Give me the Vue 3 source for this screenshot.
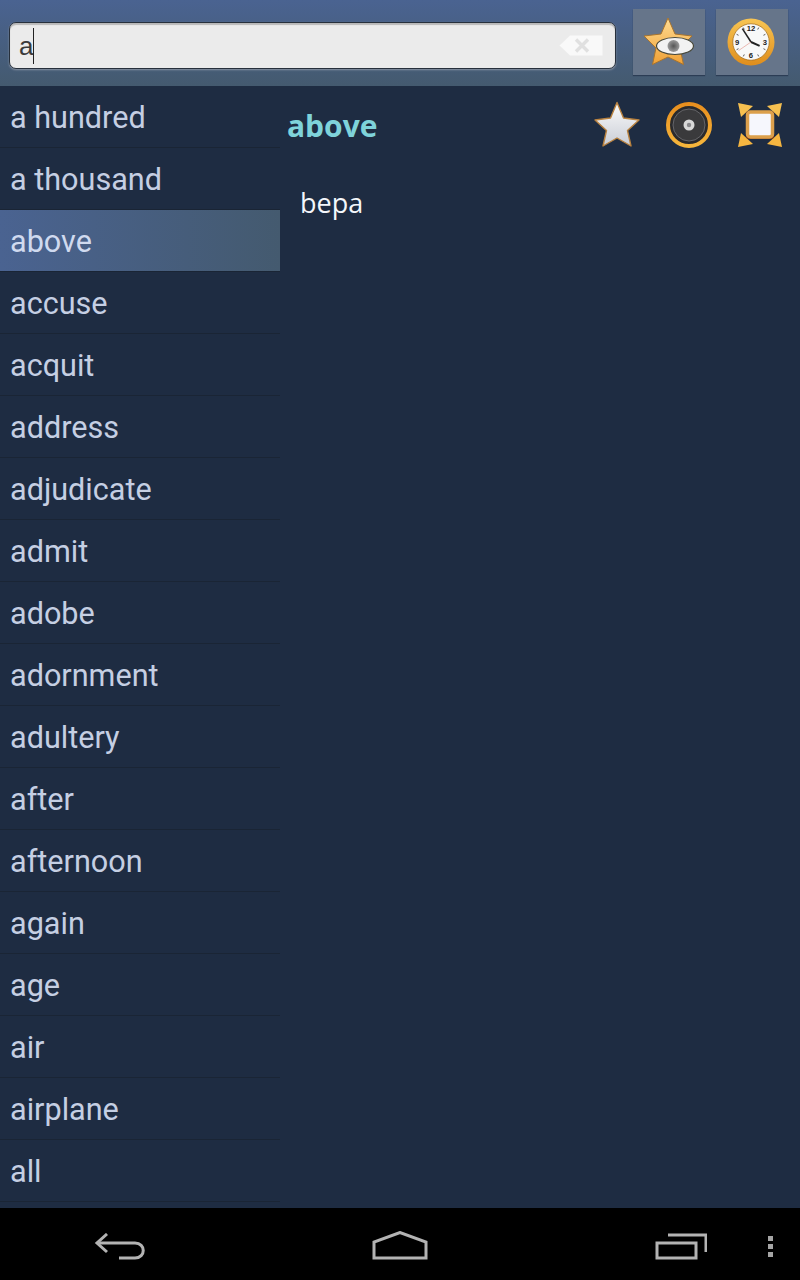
<template>
  <div class="screen">
    <header class="topbar">
      <div class="search-box">
        <span class="search-text">a</span>
        <span class="caret"></span>
        <svg class="clear-icon" width="44" height="21" viewBox="0 0 44 21">
          <path d="M11 0.5H43.5V20.5H11L0.5 10.5Z" fill="#f9f9f9" />
          <path d="M17 4.5L29 16.5M29 4.5L17 16.5" stroke="#e0e0e0" stroke-width="3.4" fill="none" />
        </svg>
      </div>
      <button class="tool-btn first">
        <svg width="54" height="54" viewBox="0 0 54 54">
          <defs>
            <linearGradient id="goldStar" x1="0" y1="0" x2="0" y2="1">
              <stop offset="0" stop-color="#ffdc92" />
              <stop offset="1" stop-color="#efa035" />
            </linearGradient>
            <radialGradient id="pupil">
              <stop offset="0" stop-color="#555" />
              <stop offset="1" stop-color="#9b9b9b" />
            </radialGradient>
          </defs>
          <path d="M26 3L33 19L50 21L38 33L41.5 49.5L26 42L10.5 49.5L14 33L2 21L19 19Z" fill="url(#goldStar)" stroke="#a8742e" stroke-width="1" stroke-linejoin="round" />
          <ellipse cx="33" cy="31" rx="18.5" ry="8.5" fill="#f2f2f2" stroke="#48483a" stroke-width="1.2" />
          <circle cx="31.5" cy="31" r="6" fill="url(#pupil)" />
        </svg>
      </button>
      <button class="tool-btn">
        <svg class="clock" width="48" height="48" viewBox="0 0 50 50">
          <defs>
            <linearGradient id="clockRim" x1="0" y1="0" x2="0" y2="1">
              <stop offset="0" stop-color="#f8c553" />
              <stop offset="1" stop-color="#df8d1c" />
            </linearGradient>
          </defs>
          <circle cx="25" cy="25" r="24.5" fill="url(#clockRim)" />
          <circle cx="25" cy="25" r="19" fill="#f8f8f8" stroke="#a8701e" stroke-width="0.8" />
          <g class="clock-num">
            <text x="25" y="14" text-anchor="middle">12</text>
            <text x="39.5" y="28" text-anchor="middle">3</text>
            <text x="25" y="42" text-anchor="middle">6</text>
            <text x="10.5" y="28" text-anchor="middle">9</text>
          </g>
          <path d="M33 10L32 12M40 17L38 18M40 33L38 32M33 40L32 38M17 40L18 38M10 33L12 32M10 17L12 18M17 10L18 12" stroke="#555" stroke-width="1" />
          <path d="M25 25L16 11" stroke="#222" stroke-width="1.6" />
          <path d="M25 25L34 29" stroke="#222" stroke-width="2" />
          <path d="M25 25L12 34" stroke="#e08a80" stroke-width="0.6" />
        </svg>
      </button>
    </header>

    <main class="content">
      <ul class="word-list">
        <li v-for="word in words" :key="word" class="word" :class="{ active: word === selected }">{{ word }}</li>
      </ul>
      <section class="detail">
        <div class="detail-head">
          <h1 class="detail-title">{{ selected }}</h1>
          <svg class="act-star" width="48" height="47" viewBox="0 0 48 47">
            <defs>
              <linearGradient id="silverStar" x1="0" y1="0" x2="0" y2="1">
                <stop offset="0" stop-color="#fbfbfb" />
                <stop offset="1" stop-color="#c9cdd6" />
              </linearGradient>
            </defs>
            <path d="M24 1.5L30.5 17L46 19L34.5 29.5L38 45L24 37L10 45L13.5 29.5L2 19L17.5 17Z" fill="url(#silverStar)" stroke="#b9823f" stroke-width="1.4" stroke-linejoin="round" />
          </svg>
          <svg class="act-speaker" width="46" height="46" viewBox="0 0 46 46">
            <defs>
              <linearGradient id="speakerRim" x1="0" y1="0" x2="0" y2="1">
                <stop offset="0" stop-color="#e88f1e" />
                <stop offset="1" stop-color="#f6b63c" />
              </linearGradient>
            </defs>
            <circle cx="23" cy="23" r="21" fill="#2a2a2c" stroke="url(#speakerRim)" stroke-width="4" />
            <circle cx="23" cy="23" r="16" fill="#3a3a3c" stroke="#66666a" stroke-width="1" />
            <circle cx="23" cy="23" r="5.5" fill="#d8d8d8" />
            <circle cx="23" cy="23" r="2.2" fill="#88888b" />
          </svg>
          <svg class="act-expand" width="46" height="46" viewBox="0 0 46 46">
            <path d="M1 1L16 4L4 15Z" fill="#f6c050" />
            <path d="M45 1L30 4L42 15Z" fill="#f6c050" />
            <path d="M1 45L4 31L16 42Z" fill="#f6b640" />
            <path d="M45 45L42 31L30 42Z" fill="#f6b640" />
            <rect x="9" y="9" width="28" height="28" rx="3" fill="#8a3c12" />
            <rect x="10.5" y="10" width="25" height="25" rx="3" fill="#f6f7fd" stroke="#dca04c" stroke-width="3.5" />
          </svg>
        </div>
        <p class="detail-text">bepa</p>
      </section>
    </main>

    <footer class="navbar">
      <svg class="nav-back" width="52" height="28" viewBox="0 0 52 28" fill="none" stroke="#b3b3b3" stroke-width="3">
        <path d="M13 1L3 10L13 19" />
        <path d="M3 10H41C52 10 52 25 41 25H25" />
      </svg>
      <svg class="nav-home" width="56" height="30" viewBox="0 0 56 30" fill="none" stroke="#b3b3b3" stroke-width="3">
        <path d="M2 27V11L28 1.5L54 11V27Z" />
      </svg>
      <svg class="nav-recent" width="52" height="28" viewBox="0 0 52 28" fill="none" stroke="#b3b3b3" stroke-width="3">
        <path d="M13 2H51V19" />
        <rect x="2" y="10" width="39" height="15" />
      </svg>
      <div class="nav-menu">
        <span></span><span></span><span></span>
      </div>
    </footer>
  </div>
</template>

<script setup>
const selected = 'above'
const words = [
  'a hundred', 'a thousand', 'above', 'accuse', 'acquit', 'address',
  'adjudicate', 'admit', 'adobe', 'adornment', 'adultery', 'after',
  'afternoon', 'again', 'age', 'air', 'airplane', 'all',
]
</script>

<style>
html, body { margin: 0; background: #000; }
</style>

<style scoped>
.screen {
  width: 800px;
  height: 1280px;
  display: flex;
  flex-direction: column;
  background: #1e2c42;
  font-family: Roboto, sans-serif;
  overflow: hidden;
}

.topbar {
  height: 86px;
  flex-shrink: 0;
  box-sizing: border-box;
  display: flex;
  align-items: flex-start;
  padding: 9px 12px 0 9px;
  background: linear-gradient(#4a6391, #445a6f);
}

.search-box {
  width: 607px;
  height: 47px;
  margin-top: 13px;
  margin-right: 17px;
  display: flex;
  align-items: center;
  box-sizing: border-box;
  padding-left: 9px;
  background: #ebebeb;
  border: 1px solid #27303c;
  border-radius: 7px;
  box-shadow: inset 0 2px 1px #b8b8b8, 0 1px 2px #8a94a3;
}

.search-text {
  font-family: "Liberation Sans", sans-serif;
  font-size: 26px;
  color: #3a3a3a;
  line-height: 1;
}

.caret {
  width: 1px;
  height: 36px;
  margin-top: 1px;
  background: #222;
}

.clear-icon {
  margin-left: auto;
  margin-right: 12px;
}

.tool-btn {
  width: 72px;
  height: 66px;
  padding: 0;
  border: none;
  background: #66758a;
  box-shadow: 0 1px 1px #2c3d55;
  display: flex;
  align-items: center;
  justify-content: center;
}

.tool-btn.first {
  margin-right: 11px;
}

.clock {
  margin-right: 2px;
}

.clock-num {
  font-family: "Liberation Sans", sans-serif;
  font-size: 8px;
  font-weight: bold;
  fill: #222;
}

.content {
  flex: 1;
  min-height: 0;
  display: flex;
}

.word-list {
  width: 280px;
  flex-shrink: 0;
  margin: 0;
  padding: 0;
  list-style: none;
  overflow: hidden;
}

.word {
  height: 62px;
  box-sizing: border-box;
  padding: 1px 0 0 10px;
  display: flex;
  align-items: center;
  font-size: 30.6px;
  color: #c5cfe3;
  border-bottom: 1px solid #1a2535;
}

.word.active {
  background: linear-gradient(90deg, #4a6391, #445a6f);
  color: #d0daef;
}

.detail {
  flex: 1;
  min-width: 0;
}

.detail-head {
  height: 77px;
  display: flex;
  align-items: center;
  padding-left: 8px;
  padding-right: 17px;
}

.detail-title {
  margin: 2px auto 0 -1px;
  font-family: "Open Sans", sans-serif;
  font-size: 30px;
  font-weight: 700;
  color: #7fd3da;
}

.act-speaker {
  margin-left: 25px;
}

.act-expand {
  margin-left: 25px;
}

.detail-text {
  margin: 21px 0 0 20px;
  font-family: "Open Sans", sans-serif;
  font-size: 27px;
  color: #f4f7fb;
}

.navbar {
  height: 72px;
  flex-shrink: 0;
  background: #000;
  display: flex;
  align-items: center;
}

.nav-back { margin-left: 94px; margin-top: 5px; }
.nav-home { margin-left: 226px; margin-top: 3px; }
.nav-recent { margin-left: 227px; margin-top: 5px; }

.nav-menu {
  margin-left: 61px;
  margin-top: 5px;
  display: flex;
  flex-direction: column;
  gap: 3px;
}

.nav-menu span {
  width: 5px;
  height: 5px;
  background: #a5a5a5;
}
</style>
